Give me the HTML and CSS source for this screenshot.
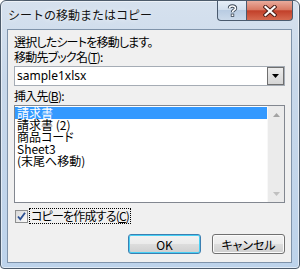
FILE: index.html
```html
<!DOCTYPE html>
<html lang="ja">
<head>
    <meta charset="UTF-8">
    <title>シートの移動またはコピー</title>
    <link rel="stylesheet" href="styles.css">
</head>
<body>
    <div class="window">
        <div class="titlebar">
            <span class="title">シートの移動またはコピー</span>
            <div class="caption-buttons">
                <div class="cap-btn help">
                    <svg width="11" height="13" viewBox="0 0 11 13">
                        <path d="M2.5 4.2 C2.5 1.5 8.5 1.2 8.5 4.2 C8.5 6.2 5.5 6.2 5.5 8.2" fill="none" stroke="#3b4756" stroke-width="3.4"/>
                        <path d="M2.5 4.2 C2.5 1.5 8.5 1.2 8.5 4.2 C8.5 6.2 5.5 6.2 5.5 8.2" fill="none" stroke="#fff" stroke-width="1.6"/>
                        <rect x="3.8" y="9.6" width="3.4" height="3.2" fill="#3b4756"/>
                        <rect x="4.6" y="10.4" width="1.8" height="1.6" fill="#fff"/>
                    </svg>
                </div>
                <div class="cap-btn close">
                    <svg width="14" height="12" viewBox="0 0 14 12">
                        <path d="M2.5 2 L11.5 10 M11.5 2 L2.5 10" stroke="#4a1e18" stroke-width="4.2" stroke-linecap="square"/>
                        <path d="M2.5 2 L11.5 10 M11.5 2 L2.5 10" stroke="#fff" stroke-width="2.2" stroke-linecap="square"/>
                    </svg>
                </div>
            </div>
        </div>

        <div class="client">
            <div class="line">選択したシートを移動します。</div>
            <div class="line">移動先ブック名(<u>T</u>):</div>
            <div class="combo">
                <span class="combo-value">sample1xlsx</span>
                <span class="combo-btn">
                    <svg width="7" height="4" viewBox="0 0 7 4"><path d="M0 0 H7 L3.5 4 Z" fill="#000"/></svg>
                </span>
            </div>
            <div class="line label-gap">挿入先(<u>B</u>):</div>
            <div class="listbox">
                <ul class="items">
                    <li class="selected">請求書</li>
                    <li>請求書 (2)</li>
                    <li>商品コード</li>
                    <li>Sheet3</li>
                    <li>(末尾へ移動)</li>
                </ul>
                <div class="scrollbar">
                    <span class="arrow">
                        <svg width="7" height="4" viewBox="0 0 7 4"><path d="M0 4 H7 L3.5 0 Z" fill="#a3a3a3"/></svg>
                    </span>
                    <span class="arrow">
                        <svg width="7" height="4" viewBox="0 0 7 4"><path d="M0 0 H7 L3.5 4 Z" fill="#c0c0c0"/></svg>
                    </span>
                </div>
            </div>
            <div class="check-row">
                <span class="checkbox">
                    <svg width="11" height="11" viewBox="0 0 11 11"><path d="M2 5.5 L4.3 8.3 L9 1.8" fill="none" stroke="#2a4f93" stroke-width="1.8"/></svg>
                </span>
                <span class="check-text">コピーを作成する(<u>C</u>)</span>
            </div>
            <div class="buttons">
                <button class="btn default">OK</button>
                <button class="btn">キャンセル</button>
            </div>
        </div>
    </div>
</body>
</html>
```

FILE: styles.css
```css
* {
    box-sizing: border-box;
}
html, body {
    margin: 0;
    padding: 0;
}
body {
    width: 300px;
    height: 269px;
    background: #fff;
    font-family: "Noto Sans CJK JP", "Noto Sans", sans-serif;
    font-size: 12px;
    color: #000;
}
.window {
    width: 300px;
    height: 269px;
    display: flex;
    flex-direction: column;
    border: 1px solid #4d5b6b;
    border-radius: 6px 6px 4px 4px;
    padding: 0 7px 5px 6px;
    background: linear-gradient(to bottom, #d6e1ee 0%, #c8d8ea 30%, #bdd3eb 100%);
    box-shadow: inset 0 0 0 1px rgba(255,255,255,0.55);
}
.titlebar {
    height: 28px;
    display: flex;
    justify-content: space-between;
    align-items: flex-start;
}
.title {
    padding-left: 1px;
    line-height: 28px;
    color: #111;
    white-space: nowrap;
    text-shadow: 0 0 5px rgba(255,255,255,0.9);
}
.caption-buttons {
    display: flex;
    margin-right: -1px;
}
.cap-btn {
    height: 20px;
    border: 1px solid #4a5a6e;
    border-top: none;
    display: flex;
    align-items: center;
    justify-content: center;
}
.help {
    width: 29px;
    border-right: none;
    border-radius: 0 0 0 4px;
    background: linear-gradient(to bottom, #e6eef7 0%, #d3e0ee 45%, #b9cce2 50%, #cbdaea 100%);
}
.close {
    width: 47px;
    border-radius: 0 0 4px 0;
    background: linear-gradient(to bottom, #e9ab9c 0%, #d97a64 45%, #c2402a 52%, #d66a50 100%);
}
.client {
    flex: 1;
    display: flex;
    flex-direction: column;
    border: 1px solid #7f93aa;
    background: #f0f0f0;
    padding: 4px 6px 0;
    font-feature-settings: "palt";
}
.line {
    line-height: 15px;
    letter-spacing: -0.8px;
    white-space: nowrap;
}
.label-gap {
    margin-top: 2px;
}
.combo {
    margin-top: 2px;
    height: 20px;
    display: flex;
    border: 1px solid #a5acb5;
    background: #fff;
}
.combo-value {
    flex: 1;
    padding-left: 2px;
    line-height: 18px;
    font-family: "Noto Sans", sans-serif;
}
.combo-btn {
    width: 17px;
    height: 18px;
    display: flex;
    align-items: center;
    justify-content: center;
    border: 1px solid #6f6f6f;
    background: linear-gradient(to bottom, #ececec, #d5d5d5);
}
.listbox {
    margin-top: 2px;
    height: 98px;
    display: flex;
    border: 1px solid #828790;
    background: #fff;
}
.items {
    flex: 1;
    list-style: none;
    margin: 0;
    padding: 1px 0 0;
}
.items li {
    height: 12px;
    line-height: 12px;
    padding-left: 2px;
    white-space: nowrap;
}
.items li.selected {
    background: #3399ff;
    color: #fff;
}
.scrollbar {
    width: 17px;
    display: flex;
    flex-direction: column;
    justify-content: space-between;
    background: #ebebeb;
    border-left: 1px solid #f8f8f8;
}
.arrow {
    height: 17px;
    display: flex;
    align-items: center;
    justify-content: center;
}
.check-row {
    margin-top: 5px;
    height: 16px;
    display: flex;
    align-items: center;
}
.checkbox {
    width: 13px;
    height: 13px;
    margin-left: 1px;
    display: flex;
    align-items: center;
    justify-content: center;
    border: 1px solid #8e8f8f;
    background: linear-gradient(135deg, #d8d8d8, #fbfbfb);
}
.check-text {
    margin-left: 2px;
    padding: 0 1px;
    line-height: 14px;
    letter-spacing: -0.8px;
    outline: 1px dotted #000;
    white-space: nowrap;
}
.buttons {
    margin-top: 10px;
    display: flex;
    justify-content: flex-end;
    gap: 11px;
}
.btn {
    width: 73px;
    height: 20px;
    padding: 0;
    font: inherit;
    color: #000;
    border: 1px solid #707070;
    border-radius: 3px;
    background: linear-gradient(to bottom, #f2f2f2 0%, #ebebeb 49%, #dddddd 50%, #cfcfcf 100%);
    box-shadow: inset 0 0 0 1px #fbfbfb;
}
.btn.default {
    border-color: #3c7fb1;
    box-shadow: inset 0 0 0 1px #48d0f5;
}
```
